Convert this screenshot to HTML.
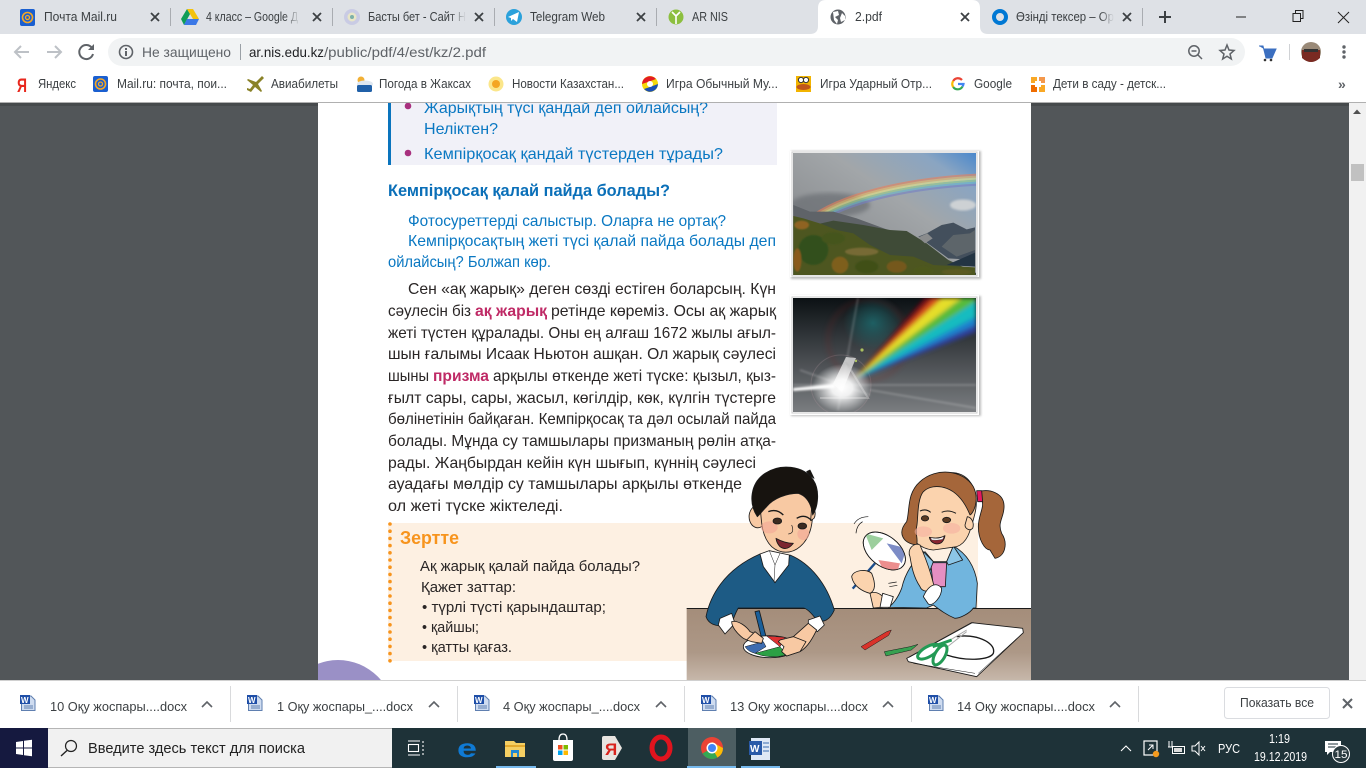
<!DOCTYPE html>
<html><head><meta charset="utf-8"><style>
html,body{margin:0;padding:0;width:1366px;height:768px;overflow:hidden;background:#fff}
svg{display:block;position:absolute;left:0;top:0}
text{font-family:"Liberation Sans","Noto Sans CJK SC",sans-serif}
.t{font-size:13px;fill:#3c4043}
.b{font-size:13px;fill:#3c4043}
.d{font-size:13px;fill:#3c4043}
.k{font-size:16px;fill:#2a2626}
.u{font-size:16px;fill:#0a78c2}
.n{font-size:15px;fill:#2a2626}
.x{stroke:#3c4043;stroke-width:1.8;fill:none}
</style></head><body>
<svg width="1366" height="768" viewBox="0 0 1366 768" xmlns="http://www.w3.org/2000/svg">
<defs>
<linearGradient id="tbl" x1="0" y1="0" x2="0" y2="1"><stop offset="0" stop-color="#a48d7a"/><stop offset=".6" stop-color="#ad9887"/><stop offset="1" stop-color="#c8b9ac"/></linearGradient>
<linearGradient id="sky" x1="0" y1="1" x2="1" y2="0"><stop offset="0" stop-color="#7b7f83"/><stop offset=".3" stop-color="#909396"/><stop offset=".6" stop-color="#a2a6a9"/><stop offset=".85" stop-color="#8aa5c2"/><stop offset="1" stop-color="#4a88cc"/></linearGradient>
<linearGradient id="pb" x1="0" y1="0" x2="0" y2="1"><stop offset="0" stop-color="#0b1114"/><stop offset=".45" stop-color="#3e4246"/><stop offset="1" stop-color="#7a7d80"/></linearGradient>
<radialGradient id="gl"><stop offset="0" stop-color="#fff"/><stop offset=".35" stop-color="#fff" stop-opacity=".9"/><stop offset="1" stop-color="#fff" stop-opacity="0"/></radialGradient>
<radialGradient id="teal"><stop offset="0" stop-color="#1c6c70" stop-opacity=".8"/><stop offset="1" stop-color="#1c6c70" stop-opacity="0"/></radialGradient>
<linearGradient id="tabf" x1="0" y1="0" x2="1" y2="0"><stop offset="0" stop-color="#dee1e6" stop-opacity="0"/><stop offset="1" stop-color="#dee1e6"/></linearGradient>
<filter id="b1"><feGaussianBlur stdDeviation="1"/></filter>
<filter id="b2"><feGaussianBlur stdDeviation="2"/></filter>
<filter id="b05"><feGaussianBlur stdDeviation=".8"/></filter>
<clipPath id="c1"><rect x="793" y="153" width="183" height="122"/></clipPath>
<clipPath id="c2"><rect x="793" y="298" width="183" height="114"/></clipPath>
<clipPath id="cv"><rect x="318" y="103" width="713" height="577"/></clipPath>
<clipPath id="cfan"><ellipse cx="613" cy="303" rx="72" ry="45" transform="rotate(38 613 303)"/></clipPath>
</defs>

<!-- Chrome top -->
<rect width="1366" height="34" fill="#dee1e6"/>
<rect y="34" width="1366" height="68" fill="#fff"/>
<rect y="102" width="1366" height="1" fill="#b0b0b0"/>
<path d="M810 34 Q818 34 818 26 V8 Q818 0 826 0 H972 Q980 0 980 8 V26 Q980 34 988 34Z" fill="#fff"/>
<g fill="#a9acb1"><rect x="170" y="8" width="1" height="18"/><rect x="332" y="8" width="1" height="18"/><rect x="494" y="8" width="1" height="18"/><rect x="656" y="8" width="1" height="18"/><rect x="1142" y="8" width="1" height="18"/></g>

<!-- tab icons -->
<rect x="20" y="9" width="15" height="17" rx="2" fill="#1a5fd0"/><circle cx="27.500" cy="17.500" r="5" fill="none" stroke="#f7a823" stroke-width="1.600"/><circle cx="27.500" cy="17.500" r="2" fill="none" stroke="#f7a823" stroke-width="1.300"/>
<path d="M187 9 L181 19 L184 25 L190 14Z" fill="#0f9d58"/><path d="M187 9 H193 L199 19 H193Z" fill="#f4c20d"/><path d="M184 25 H196 L199 19 H187Z" fill="#3b78e7"/>
<circle cx="352" cy="17" r="8" fill="#c9cbe4"/><circle cx="352" cy="17" r="4.500" fill="#e8e6c8"/><circle cx="352" cy="17" r="2" fill="#7db0a8"/>
<circle cx="514" cy="17" r="8" fill="#2ba1db"/><path d="M508 17 L519 12 L517 22 L513 19 L511 21 L511 18Z" fill="#fff"/>
<circle cx="676" cy="17" r="7.500" fill="#8cbf3f"/><path d="M676 24 V15 M676 16 L672 12 M676 16 L680 12" stroke="#fff" stroke-width="1.600" fill="none"/>
<circle cx="838" cy="17" r="7.500" fill="#5f6368"/><path d="M833 12 L838 11 L839 15 L835 17 L838 20 L837 24 L834 20Z M842 13 L845 16 L845 20 L841 22 L840 18Z" fill="#fff"/>
<circle cx="1000" cy="17" r="6" fill="none" stroke="#0078d4" stroke-width="4"/>

<!-- tab text -->
<text class="t" x="44" y="21" textLength="73" lengthAdjust="spacingAndGlyphs">Почта Mail.ru</text>
<text class="t" x="206" y="21" textLength="92" lengthAdjust="spacingAndGlyphs">4 класс – Google Д</text>
<rect x="284" y="8" width="16" height="20" fill="url(#tabf)"/>
<text class="t" x="368" y="21" textLength="98" lengthAdjust="spacingAndGlyphs">Басты бет - Сайт Н</text>
<rect x="450" y="8" width="16" height="20" fill="url(#tabf)"/>
<text class="t" x="530" y="21" textLength="75" lengthAdjust="spacingAndGlyphs">Telegram Web</text>
<text class="t" x="692" y="21" textLength="36" lengthAdjust="spacingAndGlyphs">AR NIS</text>
<text class="t" x="855" y="21" textLength="27" lengthAdjust="spacingAndGlyphs">2.pdf</text>
<text class="t" x="1016" y="21" textLength="98" lengthAdjust="spacingAndGlyphs">Өзінді тексер – Ор</text>
<rect x="1100" y="8" width="14" height="20" fill="url(#tabf)"/>

<g class="x"><path d="M151 13 L159 21 M159 13 L151 21"/><path d="M313 13 L321 21 M321 13 L313 21"/><path d="M475 13 L483 21 M483 13 L475 21"/><path d="M637 13 L645 21 M645 13 L637 21"/><path d="M961 13 L969 21 M969 13 L961 21"/><path d="M1123 13 L1131 21 M1131 13 L1123 21"/></g>
<path d="M1165 11 V23 M1159 17 H1171" stroke="#3c4043" stroke-width="2" fill="none"/>
<path d="M1236 17 H1246" stroke="#222" stroke-width="1"/>
<path d="M1293 13.500 H1300.500 V21.500 H1293Z M1295.500 13 V10.500 H1303 V18.500 H1301" stroke="#222" stroke-width="1" fill="none"/>
<path d="M1338 12 L1349 23 M1349 12 L1338 23" stroke="#222" stroke-width="1" fill="none"/>

<!-- toolbar -->
<path d="M29 52 H15 M21 46 L15 52 L21 58" stroke="#bdc1c6" stroke-width="2" fill="none"/>
<path d="M47 52 H61 M55 46 L61 52 L55 58" stroke="#bdc1c6" stroke-width="2" fill="none"/>
<path d="M92 48 A7 7 0 1 0 93 54" stroke="#5f6368" stroke-width="2" fill="none"/><path d="M94 44 V50 H88Z" fill="#5f6368"/>
<rect x="108" y="38" width="1137" height="28" rx="14" fill="#f1f3f4"/>
<circle cx="126" cy="52" r="6.500" fill="none" stroke="#5f6368" stroke-width="1.600"/><rect x="125" y="51" width="2" height="5" fill="#5f6368"/><rect x="125" y="48" width="2" height="2" fill="#5f6368"/>
<text x="142" y="57" font-size="14" fill="#5f6368" textLength="89" lengthAdjust="spacingAndGlyphs">Не защищено</text>
<rect x="240" y="44" width="1" height="16" fill="#9aa0a6"/>
<text x="249" y="57" font-size="14" fill="#202124" textLength="75" lengthAdjust="spacingAndGlyphs">ar.nis.edu.kz</text>
<text x="324" y="57" font-size="14" fill="#5f6368" textLength="162" lengthAdjust="spacingAndGlyphs">/public/pdf/4/est/kz/2.pdf</text>
<circle cx="1194" cy="51" r="5.200" fill="none" stroke="#5f6368" stroke-width="1.500"/><path d="M1198 55 L1202 59 M1191.500 51 H1196.500" stroke="#5f6368" stroke-width="1.500"/>
<path d="M1227 45 L1229 50 L1234 50.500 L1230 54 L1231.300 59 L1227 56.300 L1222.700 59 L1224 54 L1220 50.500 L1225 50Z" fill="none" stroke="#5f6368" stroke-width="1.500"/>
<path d="M1259 46 H1263 L1266 58 H1272 L1276 49 H1264" fill="#3b6fc0" stroke="#3b6fc0" stroke-width="1"/><circle cx="1265" cy="60" r="1.300" fill="#333"/><circle cx="1271" cy="60" r="1.300" fill="#333"/>
<rect x="1289" y="44" width="1" height="16" fill="#d0d2d5"/>
<circle cx="1311" cy="52" r="10" fill="#9a8a78"/><path d="M1302 50 H1320 V58 Q1311 66 1302 58Z" fill="#7a2a22"/><rect x="1304" y="49" width="14" height="3" fill="#333"/>
<g fill="#5f6368"><circle cx="1344" cy="47" r="1.700"/><circle cx="1344" cy="52" r="1.700"/><circle cx="1344" cy="57" r="1.700"/></g>

<!-- bookmarks -->
<text x="17" y="92" font-size="19" font-weight="bold" fill="#e8281e" textLength="10" lengthAdjust="spacingAndGlyphs">Я</text>
<text class="b" x="38" y="88" textLength="38" lengthAdjust="spacingAndGlyphs">Яндекс</text>
<rect x="93" y="76" width="15" height="16" rx="2" fill="#1a5fd0"/><circle cx="100.500" cy="84" r="5" fill="none" stroke="#f7a823" stroke-width="1.600"/><circle cx="100.500" cy="84" r="2" fill="none" stroke="#f7a823" stroke-width="1.300"/>
<text class="b" x="117" y="88" textLength="110" lengthAdjust="spacingAndGlyphs">Mail.ru: почта, пои...</text>
<path d="M262 76 L256 82 L248 79 L247 80 L253 85 L250 89 L247 88 L247 90 L251 92 L255 87 L261 92 L262 91 L258 84 L264 78Z" fill="#8a8228"/>
<text class="b" x="271" y="88" textLength="67" lengthAdjust="spacingAndGlyphs">Авиабилеты</text>
<circle cx="361" cy="80" r="3.500" fill="#f2b035"/><ellipse cx="365" cy="84" rx="8" ry="3.500" fill="#dfe7f0"/><rect x="357" y="85" width="15" height="7" rx="1.500" fill="#2060a8"/>
<text class="b" x="379" y="88" textLength="92" lengthAdjust="spacingAndGlyphs">Погода в Жаксах</text>
<circle cx="496" cy="84" r="7.500" fill="#fbe68a"/><circle cx="496" cy="84" r="4" fill="#f4a623"/>
<text class="b" x="512" y="88" textLength="112" lengthAdjust="spacingAndGlyphs">Новости Казахстан...</text>
<circle cx="650" cy="84" r="8" fill="#f5d90a"/><path d="M642 84 A8 8 0 0 1 656 79 L648 82Z" fill="#e31b23"/><path d="M644 89 A8 8 0 0 0 658 84 L650 87Z" fill="#1a4fb4"/><circle cx="650" cy="84" r="3" fill="#fff"/>
<text class="b" x="666" y="88" textLength="112" lengthAdjust="spacingAndGlyphs">Игра Обычный Му...</text>
<rect x="796" y="76" width="15" height="16" fill="#f2b400"/><circle cx="801" cy="80" r="2.600" fill="#fff" stroke="#333"/><circle cx="806" cy="80" r="2.600" fill="#fff" stroke="#333"/><ellipse cx="803.500" cy="87" rx="7" ry="3" fill="#c0561a"/>
<text class="b" x="820" y="88" textLength="112" lengthAdjust="spacingAndGlyphs">Игра Ударный Отр...</text>
<g fill="none" stroke-width="2.200"><path d="M962 80 A5.500 5.500 0 0 0 953.200 81" stroke="#ea4335"/><path d="M953.200 81 A5.500 5.500 0 0 0 953.200 87" stroke="#fbbc05"/><path d="M953.200 87 A5.500 5.500 0 0 0 962.500 86.500" stroke="#34a853"/><path d="M958 84 H963.500 A5.500 5.500 0 0 1 962.500 86.500" stroke="#4285f4"/></g>
<text class="b" x="974" y="88" textLength="38" lengthAdjust="spacingAndGlyphs">Google</text>
<rect x="1031" y="77" width="6" height="6" fill="#f9a825"/><rect x="1039" y="77" width="6" height="6" fill="#ef6c00" fill-opacity=".7"/><rect x="1031" y="85" width="6" height="7" fill="#ef6c00"/><rect x="1039" y="85" width="6" height="7" fill="#f9a825"/><rect x="1035" y="81" width="6" height="6" fill="#fff"/>
<text class="b" x="1053" y="88" textLength="113" lengthAdjust="spacingAndGlyphs">Дети в саду - детск...</text>
<text x="1338" y="89" font-size="14" font-weight="bold" fill="#5f6368">»</text>

<!-- viewer -->
<rect y="103" width="1349" height="577" fill="#525659"/>
<rect y="103" width="1349" height="3" fill="#3f4345" opacity=".6"/>
<rect x="1349" y="103" width="17" height="577" fill="#f1f1f1"/>
<path d="M1353 114 L1357 109.500 L1361 114Z" fill="#505050"/>
<rect x="1351" y="164" width="13" height="17" fill="#c1c1c1"/>
<rect x="318" y="103" width="713" height="577" fill="#fff"/>

<g clip-path="url(#cv)">
<!-- blue box -->
<rect x="388" y="103" width="389" height="62" fill="#f1f1f8"/>
<rect x="388" y="103" width="3" height="62" fill="#0a74bd"/>
<circle cx="408" cy="106" r="3.300" fill="#a8307e"/><circle cx="408" cy="153" r="3.300" fill="#a8307e"/>
<text class="u" x="424" y="113" textLength="284" lengthAdjust="spacingAndGlyphs">Жарықтың түсі қандай деп ойлайсың?</text>
<text class="u" x="424" y="134" textLength="74" lengthAdjust="spacingAndGlyphs">Неліктен?</text>
<text class="u" x="424" y="159" textLength="299" lengthAdjust="spacingAndGlyphs">Кемпірқосақ қандай түстерден тұрады?</text>
<text x="388" y="196" font-size="17" font-weight="bold" fill="#0a6fb8" textLength="282" lengthAdjust="spacingAndGlyphs">Кемпірқосақ қалай пайда болады?</text>
<text class="u" x="408" y="226" textLength="318" lengthAdjust="spacingAndGlyphs">Фотосуреттерді  салыстыр. Оларға не ортақ?</text>
<text class="u" x="408" y="246" textLength="368" lengthAdjust="spacingAndGlyphs">Кемпірқосақтың жеті түсі қалай пайда болады деп</text>
<text class="u" x="388" y="267" textLength="163" lengthAdjust="spacingAndGlyphs">ойлайсың? Болжап көр.</text>

<!-- body -->
<text class="k" x="408" y="294" textLength="368" lengthAdjust="spacingAndGlyphs">Сен «ақ жарық» деген сөзді естіген боларсың. Күн</text>
<text class="k" x="388" y="316" textLength="83" lengthAdjust="spacingAndGlyphs">сәулесін біз</text>
<text class="k" x="475" y="316" font-weight="bold" style="fill:#bf2a66" textLength="72" lengthAdjust="spacingAndGlyphs">ақ жарық</text>
<text class="k" x="551" y="316" textLength="225" lengthAdjust="spacingAndGlyphs">ретінде көреміз. Осы ақ жарық</text>
<text class="k" x="388" y="338" textLength="388" lengthAdjust="spacingAndGlyphs">жеті түстен құралады. Оны ең алғаш 1672 жылы ағыл-</text>
<text class="k" x="388" y="359" textLength="388" lengthAdjust="spacingAndGlyphs">шын ғалымы Исаак Ньютон ашқан. Ол жарық сәулесі</text>
<text class="k" x="388" y="381" textLength="41" lengthAdjust="spacingAndGlyphs">шыны</text>
<text class="k" x="433" y="381" font-weight="bold" style="fill:#bf2a66" textLength="56" lengthAdjust="spacingAndGlyphs">призма</text>
<text class="k" x="493" y="381" textLength="283" lengthAdjust="spacingAndGlyphs">арқылы өткенде жеті түске: қызыл, қыз-</text>
<text class="k" x="388" y="403" textLength="388" lengthAdjust="spacingAndGlyphs">ғылт сары, сары, жасыл, көгілдір, көк, күлгін түстерге</text>
<text class="k" x="388" y="424" textLength="388" lengthAdjust="spacingAndGlyphs">бөлінетінін байқаған. Кемпірқосақ та дәл осылай пайда</text>
<text class="k" x="388" y="446" textLength="388" lengthAdjust="spacingAndGlyphs">болады. Мұнда су тамшылары призманың рөлін атқа-</text>
<text class="k" x="388" y="468" textLength="368" lengthAdjust="spacingAndGlyphs">рады. Жаңбырдан кейін күн шығып, күннің сәулесі</text>
<text class="k" x="388" y="489" textLength="354" lengthAdjust="spacingAndGlyphs">ауадағы мөлдір су тамшылары арқылы өткенде</text>
<text class="k" x="388" y="511" textLength="175" lengthAdjust="spacingAndGlyphs">ол жеті түске жіктеледі.</text>

<!-- zertte box -->
<rect x="388" y="523" width="590" height="138" fill="#fdf0e2"/>
<path d="M390 524 V661" stroke="#f7941d" stroke-width="3.600" stroke-linecap="round" stroke-dasharray="0 7.200"/>
<text x="400" y="544" font-size="18" font-weight="bold" fill="#f7941d" textLength="59" lengthAdjust="spacingAndGlyphs">Зертте</text>
<text class="n" x="420" y="571" textLength="220" lengthAdjust="spacingAndGlyphs">Ақ жарық қалай пайда болады?</text>
<text class="n" x="421" y="592" textLength="95" lengthAdjust="spacingAndGlyphs">Қажет заттар:</text>
<text class="n" x="422" y="612" textLength="184" lengthAdjust="spacingAndGlyphs">• түрлі түсті қарындаштар;</text>
<text class="n" x="422" y="632" textLength="57" lengthAdjust="spacingAndGlyphs">• қайшы;</text>
<text class="n" x="422" y="652" textLength="90" lengthAdjust="spacingAndGlyphs">• қатты қағаз.</text>
<circle cx="338" cy="716" r="56" fill="#9a90c6"/>

<!-- rainbow photo -->
<rect x="791" y="151" width="190" height="128" fill="#888" opacity=".55" filter="url(#b1)"/>
<rect x="790" y="151" width="189" height="126" fill="#fff"/>
<rect x="792" y="152" width="185" height="124" fill="none" stroke="#ccc" stroke-width="1"/>
<g clip-path="url(#c1)">
<rect x="793" y="153" width="183" height="122" fill="url(#sky)"/>
<ellipse cx="830" cy="205" rx="40" ry="12" fill="#6a6e73" opacity=".7" filter="url(#b2)"/>
<ellipse cx="963" cy="205" rx="13" ry="5.500" fill="#cdd1d4" filter="url(#b1)"/>
<g transform="translate(790 150) scale(.33333)">
<g fill="none" stroke-width="6.500" opacity=".6" filter="url(#b05)">
<path d="M52 208 C150 130 350 85 560 74" stroke="#e9805a"/>
<path d="M56 212 C155 135 350 91 560 80" stroke="#f0b860"/>
<path d="M60 216 C160 140 352 97 560 86" stroke="#ece884"/>
<path d="M64 219 C165 145 354 103 560 92" stroke="#98d08a"/>
<path d="M68 222 C170 150 356 109 560 98" stroke="#6ab8cc"/>
<path d="M72 225 C175 155 358 115 560 104" stroke="#7480c4"/>
</g>
<path d="M10 165 L60 185 L130 185 L200 205 L295 240 H10Z" fill="#5e6368" filter="url(#b1)"/>
<path d="M85 222 L130 212 L220 225 L300 240 L350 243 L410 280 L475 330 L560 370 V380 H85Z" fill="#3f4b37"/>
<path d="M385 260 L410 250 L455 225 L490 218 L530 238 L555 232 V330 L475 325 L420 285Z" fill="#434f5c"/>
<path d="M385 262 L412 250 L428 265 L405 280Z" fill="#8a8c8d"/>
<path d="M455 290 L490 255 L540 250 L555 240 V300 L500 320Z" fill="#5d656a"/>
<path d="M470 345 L555 308 V350 Z" fill="#233443"/>
<path d="M10 198 L40 205 L95 222 L140 240 L190 250 L240 285 L300 315 L370 320 L430 345 L555 352 V378 H10Z" fill="#4d5620"/>
<g filter="url(#b2)">
<ellipse cx="35" cy="225" rx="22" ry="13" fill="#8f6420"/>
<ellipse cx="70" cy="300" rx="45" ry="45" fill="#33501c"/>
<ellipse cx="22" cy="330" rx="12" ry="35" fill="#8a5a1e"/>
<ellipse cx="130" cy="265" rx="35" ry="18" fill="#44551c"/>
<ellipse cx="150" cy="345" rx="25" ry="25" fill="#7e5e1e"/>
<ellipse cx="215" cy="305" rx="50" ry="12" fill="#776a36"/>
<ellipse cx="230" cy="350" rx="35" ry="20" fill="#3f5019"/>
<ellipse cx="320" cy="350" rx="30" ry="18" fill="#75591f"/>
<ellipse cx="400" cy="362" rx="30" ry="12" fill="#4e581e"/>
<ellipse cx="500" cy="366" rx="45" ry="9" fill="#5b5a22"/>
</g>
</g>
</g>

<!-- prism photo -->
<rect x="791" y="296" width="190" height="120" fill="#888" opacity=".55" filter="url(#b1)"/>
<rect x="790" y="295" width="189" height="120" fill="#fff"/>
<rect x="792" y="297" width="185" height="116" fill="none" stroke="#ccc" stroke-width="1"/>
<g clip-path="url(#c2)">
<rect x="793" y="298" width="183" height="114" fill="url(#pb)"/>
<ellipse cx="873" cy="323" rx="30" ry="28" fill="url(#teal)"/>
<circle cx="841" cy="385" r="30" fill="none" stroke="#c0a0a8" stroke-width="1" opacity=".22"/>
<circle cx="868" cy="340" r="40" fill="none" stroke="#7a2020" stroke-width="6" opacity=".15" filter="url(#b2)"/>
<g filter="url(#b2)">
<path d="M852 381 L925 298 H933Z" fill="#7a0f14"/>
<path d="M852 381 L933 298 H942Z" fill="#d8501c"/>
<path d="M852 381 L942 298 H962Z" fill="#e5de2a"/>
<path d="M852 381 L962 298 H976 V301Z" fill="#57bb3a"/>
<path d="M852 381 L976 301 V317Z" fill="#19bcc0"/>
<path d="M852 381 L976 317 V325Z" fill="#1d82cf"/>
<path d="M852 381 L976 325 V332Z" fill="#2f3f9c"/>
</g>
<g filter="url(#b1)"><path d="M793 388 L835 384 V388 L793 391Z" fill="#fff"/><path d="M800 370 L870 395 M793 385 L976 385 M870 390 L976 408 M858 298 L838 410" stroke="#fff" stroke-width="1.200" opacity=".3"/></g>
<path d="M833 384 L846 357 L856 358 L842 392Z" fill="#d8d8d8" opacity=".85"/>
<path d="M846 362 L868 398 L820 398" fill="none" stroke="#bbb" stroke-width="2" opacity=".5"/>
<ellipse cx="842" cy="388" rx="30" ry="24" fill="url(#gl)"/>
<circle cx="862" cy="350" r="1.600" fill="#aac060"/><circle cx="856" cy="361" r="1.200" fill="#aac060"/>
</g>

<!-- illustration, in zoom coords -->
<g transform="translate(680 450) scale(.33333)" stroke="#1a1a1a" stroke-width="2.500" stroke-linejoin="round">
<rect x="20" y="475" width="1034" height="220" fill="url(#tbl)" stroke="none"/>
<rect x="20" y="474" width="1034" height="3" fill="#1a1a1a" stroke="none"/>

<!-- girl -->
<path d="M895 125 C930 115 970 130 972 165 C975 200 950 215 965 250 C985 280 975 320 945 325 L930 300 C915 300 895 270 895 230 C895 195 915 170 905 150Z" fill="#a5663a"/>
<path d="M890 122 L905 122 L908 155 L893 155Z" fill="#e5195f"/>
<path d="M625 472 C640 462 655 440 665 415 C675 370 700 330 735 305 L760 335 L800 335 L820 288 C860 310 885 350 892 400 L888 474 L880 474 C870 490 840 505 825 505 C800 495 780 480 760 465 L740 474Z" fill="#71b5de"/>
<path d="M752 338 L800 338 L796 410 L760 410Z" fill="#e58fc2"/>
<path d="M730 305 L760 335 L745 375 L728 345Z M820 288 L848 330 L805 345 L800 335Z" fill="#8cc6e7"/>
<path d="M685 215 C690 130 750 65 820 68 C870 72 900 125 885 190 C870 250 860 280 830 290 L760 300 C710 295 695 260 690 250Z" fill="#fbd3ae"/>
<path d="M862 200 A20 25 0 0 1 878 235 C868 245 855 235 855 225Z" fill="#fbd3ae"/>
<path d="M710 285 C670 280 650 250 680 215 C690 180 680 130 720 95 C770 50 850 60 880 110 C900 150 880 190 870 195 C860 170 840 130 800 115 C770 105 745 110 730 125 C710 150 715 210 710 230 C705 250 715 265 710 285Z" fill="#a5663a"/>
<ellipse cx="730" cy="245" rx="26" ry="16" fill="#f6b1a0" stroke="none" opacity=".6"/>
<ellipse cx="815" cy="235" rx="26" ry="16" fill="#f6b1a0" stroke="none" opacity=".6"/>
<ellipse cx="735" cy="205" rx="11" ry="8" fill="#5b3a22"/><ellipse cx="800" cy="210" rx="12" ry="8" fill="#5b3a22"/>
<path d="M720 183 Q738 175 752 187 M785 187 Q805 178 828 190" fill="none" stroke-width="3"/>
<path d="M748 262 Q775 268 795 257 Q790 282 770 282 Q752 280 748 262Z" fill="#8a2430"/>
<path d="M752 263 Q775 269 792 259 L788 268 Q770 272 755 270Z" fill="#fff" stroke-width="1"/>
<path d="M690 320 C680 300 700 275 720 285 C730 310 745 340 760 400 C770 420 730 435 720 410 C700 380 695 350 690 320Z" fill="#fbd3ae"/>
<path d="M730 440 C750 395 775 400 785 415 C785 440 760 470 745 462Z" fill="#fff"/>
<ellipse cx="613" cy="303" rx="72" ry="45" transform="rotate(38 613 303)" fill="#fff"/>
<g clip-path="url(#cfan)" stroke="none"><path d="M555 250 L610 265 L575 300Z" fill="#9ccf9d"/><path d="M620 280 L680 295 L665 340Z" fill="#7d8cc6"/><path d="M595 330 L660 340 L650 370 L610 360Z" fill="#ec8e8e"/></g>
<ellipse cx="613" cy="303" rx="72" ry="45" transform="rotate(38 613 303)" fill="none"/>
<path d="M585 340 L518 416" stroke="#1a4c8c" stroke-width="7" fill="none"/>
<path d="M515 380 C520 360 560 355 575 370 C585 395 590 420 570 430 C550 425 520 410 515 380Z" fill="#fbd3ae"/>
<path d="M570 430 C590 420 620 440 625 470 L580 474Z" fill="#fbd3ae"/>
<path d="M608 430 L640 440 L630 472 L600 472Z" fill="#fff"/>
<path d="M522 222 Q535 200 565 200 M528 250 Q530 225 548 215 M625 400 L650 396 M628 410 L652 406" fill="none" stroke-width="2"/>

<!-- boy -->
<path d="M150 530 C100 530 85 520 78 500 C90 440 130 360 240 312 L285 398 L330 315 C390 340 440 400 463 480 C450 510 430 520 410 510 C395 490 380 475 370 474 L175 474 C165 490 160 510 150 530Z" fill="#1d5b85"/>
<path d="M240 312 L268 302 L328 315 L326 345 L285 398 L250 350Z" fill="#fff"/>
<path d="M282 395 L285 345 M268 302 L285 345 L300 310" fill="none" stroke-width="1.500"/>
<path d="M120 505 L155 490 L165 520 L135 552 L115 525Z M385 510 L420 498 L433 525 L412 545 L385 525Z" fill="#fff"/>
<path d="M155 515 C175 510 200 530 210 545 L245 560 L250 575 L225 580 L190 565 C170 550 155 530 155 515Z" fill="#f8c9a3"/>
<path d="M385 520 L410 540 C400 560 385 590 360 605 L320 618 L298 575 L340 560Z" fill="#f8c9a3"/>
<path d="M225 485 L238 482 L262 575 L250 585Z" fill="#1a5f9a"/>
<ellipse cx="270" cy="590" rx="80" ry="33" fill="#fff"/>
<path d="M260 558 L315 562 L300 590Z" fill="#de3131" stroke-width="1.500"/>
<path d="M225 610 L300 590 L320 615 Q270 628 225 610Z" fill="#2ca044" stroke-width="1.500"/>
<path d="M195 590 L250 575 L258 590 L225 610Q205 605 195 590Z" fill="#3e6cb0" stroke-width="1.500"/>
<path d="M300 570 L340 560 L378 575 L360 605 L320 618 L305 605 L312 590 L295 575Z" fill="#f8c9a3"/>
<path d="M200 570 L225 545 L250 565 L245 580 L215 575Z" fill="#f8c9a3"/>
<path d="M222 170 A22 28 0 0 0 245 230 L252 200Z" fill="#f8c9a3"/>
<path d="M240 110 L398 110 C405 225 390 265 360 290 C335 312 300 312 275 290 C250 265 240 235 240 110Z" fill="#f8c9a3"/>
<path d="M395 170 A15 22 0 0 1 402 205 L392 212Z" fill="#f8c9a3"/>
<path d="M232 200 C205 160 210 100 255 70 C300 40 370 45 400 90 C420 120 415 170 398 195 C395 170 385 140 355 130 C320 130 280 145 260 170 C250 180 242 190 232 200Z" fill="#17130f"/>
<path d="M380 65 L390 60 L402 85 L388 75Z" fill="#17130f"/>
<ellipse cx="268" cy="232" rx="25" ry="18" fill="#f4a796" stroke="none" opacity=".6"/><ellipse cx="370" cy="252" rx="18" ry="18" fill="#f4a796" stroke="none" opacity=".6"/>
<ellipse cx="292" cy="213" rx="13" ry="9" fill="#3c2a20"/><ellipse cx="367" cy="228" rx="13" ry="9" fill="#3c2a20"/>
<path d="M265 185 Q290 175 310 195 M350 205 Q375 190 395 212" fill="none" stroke-width="4"/>
<path d="M335 225 Q345 250 325 252" fill="none" stroke-width="2"/>
<path d="M288 265 Q315 280 340 280 Q320 305 300 290 Q290 280 288 265Z" fill="#7c2630"/>

<!-- pencils / scissors / paper -->
<path d="M543 590 L620 545 L634 540 L626 556 L555 600Z" fill="#d9322a" stroke-width="1.500"/>
<path d="M613 605 L690 590 L714 583 L694 600 L618 618Z" fill="#37a050" stroke-width="1.500"/>
<path d="M875 518 L1028 535 L1030 548 L890 680 L685 635 L680 625Z" fill="#fff"/>
<path d="M688 622 L880 517 M700 640 L885 670 M1030 548 L895 670" fill="none" stroke-width="1.500"/>
<path d="M830 560 C880 550 950 575 940 610 C930 630 860 635 800 615" fill="none" stroke-width="4"/>
<path d="M770 595 L860 540 M790 600 L860 545" stroke="#aaa" stroke-width="3" fill="none"/>
<ellipse cx="745" cy="605" rx="36" ry="15" transform="rotate(-30 745 605)" fill="#fff" stroke="#239a55" stroke-width="9"/>
<ellipse cx="780" cy="615" rx="15" ry="33" transform="rotate(30 780 615)" fill="#fff" stroke="#239a55" stroke-width="9"/>
<path d="M758 590 L815 570" stroke="#239a55" stroke-width="9" fill="none"/>
</g>
</g>

<!-- download bar -->
<rect y="680" width="1366" height="48" fill="#fff"/>
<rect y="680" width="1366" height="1" fill="#d0d0d0"/>
<g fill="#d9dadc"><rect x="230" y="686" width="1" height="36"/><rect x="457" y="686" width="1" height="36"/><rect x="684" y="686" width="1" height="36"/><rect x="911" y="686" width="1" height="36"/><rect x="1138" y="686" width="1" height="36"/></g>
<g><path d="M21.500 696 H31 L35 700 V710.500 H21.500Z" fill="#cfdcf0" stroke="#5f7fb0"/><rect x="20" y="695" width="10" height="9" fill="#1f4fa8"/><text x="21" y="703" font-size="8" font-weight="bold" fill="#fff">W</text><path d="M24 706 H33 M24 708 H33" stroke="#5f7fb0"/></g>
<g transform="translate(227 0)"><path d="M21.500 696 H31 L35 700 V710.500 H21.500Z" fill="#cfdcf0" stroke="#5f7fb0"/><rect x="20" y="695" width="10" height="9" fill="#1f4fa8"/><text x="21" y="703" font-size="8" font-weight="bold" fill="#fff">W</text><path d="M24 706 H33 M24 708 H33" stroke="#5f7fb0"/></g>
<g transform="translate(454 0)"><path d="M21.500 696 H31 L35 700 V710.500 H21.500Z" fill="#cfdcf0" stroke="#5f7fb0"/><rect x="20" y="695" width="10" height="9" fill="#1f4fa8"/><text x="21" y="703" font-size="8" font-weight="bold" fill="#fff">W</text><path d="M24 706 H33 M24 708 H33" stroke="#5f7fb0"/></g>
<g transform="translate(681 0)"><path d="M21.500 696 H31 L35 700 V710.500 H21.500Z" fill="#cfdcf0" stroke="#5f7fb0"/><rect x="20" y="695" width="10" height="9" fill="#1f4fa8"/><text x="21" y="703" font-size="8" font-weight="bold" fill="#fff">W</text><path d="M24 706 H33 M24 708 H33" stroke="#5f7fb0"/></g>
<g transform="translate(908 0)"><path d="M21.500 696 H31 L35 700 V710.500 H21.500Z" fill="#cfdcf0" stroke="#5f7fb0"/><rect x="20" y="695" width="10" height="9" fill="#1f4fa8"/><text x="21" y="703" font-size="8" font-weight="bold" fill="#fff">W</text><path d="M24 706 H33 M24 708 H33" stroke="#5f7fb0"/></g>
<text class="d" x="50" y="711" textLength="137" lengthAdjust="spacingAndGlyphs">10 Оқу жоспары....docx</text>
<text class="d" x="277" y="711" textLength="136" lengthAdjust="spacingAndGlyphs">1 Оқу жоспары_....docx</text>
<text class="d" x="503" y="711" textLength="137" lengthAdjust="spacingAndGlyphs">4 Оқу жоспары_....docx</text>
<text class="d" x="730" y="711" textLength="138" lengthAdjust="spacingAndGlyphs">13 Оқу жоспары....docx</text>
<text class="d" x="957" y="711" textLength="138" lengthAdjust="spacingAndGlyphs">14 Оқу жоспары....docx</text>
<g fill="none" stroke="#5f6368" stroke-width="1.600"><path d="M202 707 L207 702 L212 707"/><path d="M429 707 L434 702 L439 707"/><path d="M656 707 L661 702 L666 707"/><path d="M883 707 L888 702 L893 707"/><path d="M1110 707 L1115 702 L1120 707"/></g>
<rect x="1224.500" y="687.500" width="105" height="31" rx="3" fill="#fff" stroke="#dadce0"/>
<text x="1240" y="707" font-size="12.500" fill="#3c4043" textLength="74" lengthAdjust="spacingAndGlyphs">Показать все</text>
<path d="M1343 699 L1352 708 M1352 699 L1343 708" stroke="#5f6368" stroke-width="2" fill="none"/>

<!-- taskbar -->
<rect y="728" width="1366" height="40" fill="#1e3238"/>
<rect y="728" width="48" height="40" fill="#15193f"/>
<g fill="#fff"><path d="M16 742 L23 741 V747.500 H16Z M24 740.800 L32 739.700 V747.500 H24Z M16 748.500 H23 V755 L16 754Z M24 748.500 H32 V756.300 L24 755.200Z"/></g>
<rect x="48" y="728" width="344" height="40" fill="#f1f1f1"/>
<rect x="48" y="728" width="344" height="1" fill="#b5b5b5"/><rect x="48" y="767" width="344" height="1" fill="#b5b5b5"/>
<circle cx="71" cy="746" r="5.500" fill="none" stroke="#222" stroke-width="1.200"/><path d="M67 750.500 L61 756" stroke="#222" stroke-width="1.400"/>
<text x="88" y="753" font-size="14.500" fill="#222" textLength="217" lengthAdjust="spacingAndGlyphs">Введите здесь текст для поиска</text>
<g stroke="#fff" stroke-width="1.100" fill="none"><path d="M408 741 H420 M408 755 H420"/><rect x="408.500" y="744.500" width="10" height="7"/><path d="M423 741 V755" stroke-dasharray="2 2"/></g>
<text x="457" y="757" font-size="26" font-weight="bold" fill="#0f7ad4" textLength="20" lengthAdjust="spacingAndGlyphs">e</text>
<path d="M505 741 H514 L516 743 H525 V757 H505Z" fill="#f5cf63"/><rect x="505" y="745" width="20" height="2" fill="#e3a92d"/><rect x="511" y="750" width="8" height="7" fill="#1e88d4"/><rect x="513" y="753" width="4" height="4" fill="#f5cf63"/>
<rect x="496" y="766" width="40" height="2" fill="#76b9ed"/>
<path d="M553 740 H573 V759 Q573 761 571 761 H555 Q553 761 553 759Z" fill="#fff"/><path d="M559 740 Q559 734 563 734 Q567 734 567 740" fill="none" stroke="#fff" stroke-width="1.300"/>
<rect x="558" y="745" width="4.500" height="4.500" fill="#f25022"/><rect x="563.500" y="745" width="4.500" height="4.500" fill="#7fba00"/><rect x="558" y="750.500" width="4.500" height="4.500" fill="#00a4ef"/><rect x="563.500" y="750.500" width="4.500" height="4.500" fill="#ffb900"/>
<path d="M602 738 Q602 736 604 736 H615 L622 748 L615 760 H604 Q602 760 602 758Z" fill="#e8e4e0"/>
<text x="605" y="755" font-size="17" font-weight="bold" fill="#d9231d">Я</text>
<ellipse cx="661" cy="748" rx="9" ry="11" fill="none" stroke="#e0141e" stroke-width="5"/>
<rect x="688" y="728" width="48" height="40" fill="#4d5e62"/>
<rect x="687" y="766" width="49" height="2" fill="#76b9ed"/>
<circle cx="712" cy="748" r="11" fill="#ea4335"/><path d="M712 748 L702.500 753.500 A11 11 0 0 0 717.500 757.500Z" fill="#34a853"/><path d="M712 748 L717.500 757.500 A11 11 0 0 0 723 748 L712 742Z" fill="#fbbc05"/><circle cx="712" cy="748" r="5.500" fill="#fff"/><circle cx="712" cy="748" r="4" fill="#4285f4"/>
<rect x="741" y="766" width="39" height="2" fill="#76b9ed"/>
<path d="M751 738 H770 V760 H751Z" fill="#dfe8f5"/><rect x="749" y="741" width="13" height="14" fill="#2a5aa8"/><text x="750" y="752" font-size="10" font-weight="bold" fill="#fff">W</text><path d="M763 743 H769 M763 747 H769 M763 751 H769" stroke="#5b84bf" stroke-width="1.200"/>
<!-- tray -->
<path d="M1121 751 L1126 746 L1131 751" stroke="#fff" stroke-width="1.100" fill="none"/>
<rect x="1144" y="741" width="13" height="14" fill="none" stroke="#fff" stroke-width="1.200"/><path d="M1148 750 L1153 745 M1149 745 H1153 V749" stroke="#fff" stroke-width="1" fill="none"/><circle cx="1156" cy="754" r="3.200" fill="#f39a1e"/>
<path d="M1169 741 V747 M1172 741 V747 M1168 747 H1173" stroke="#fff" fill="none"/><rect x="1172.500" y="746.500" width="12" height="7" fill="none" stroke="#fff"/><rect x="1174" y="748" width="8" height="4" fill="#ddd"/>
<path d="M1192 746 H1195 L1199 742 V755 L1195 751 H1192Z" fill="none" stroke="#fff"/><path d="M1201 746 L1205 751 M1205 746 L1201 751" stroke="#fff"/>
<text x="1218" y="753" font-size="12.500" fill="#fff" textLength="22" lengthAdjust="spacingAndGlyphs">РУС</text>
<text x="1269" y="743" font-size="12.500" fill="#fff" textLength="21" lengthAdjust="spacingAndGlyphs">1:19</text>
<text x="1254" y="761" font-size="12.500" fill="#fff" textLength="53" lengthAdjust="spacingAndGlyphs">19.12.2019</text>
<path d="M1325 741 H1341 V752 H1330 L1327 755 V752 H1325Z" fill="#fff"/><path d="M1328 744 H1338 M1328 747 H1338" stroke="#1e3238"/>
<circle cx="1341" cy="754" r="8.500" fill="#2a3b40" stroke="#fff"/><text x="1334.500" y="758" font-size="11" fill="#fff" textLength="13" lengthAdjust="spacingAndGlyphs">15</text>
</svg>
</body></html>
